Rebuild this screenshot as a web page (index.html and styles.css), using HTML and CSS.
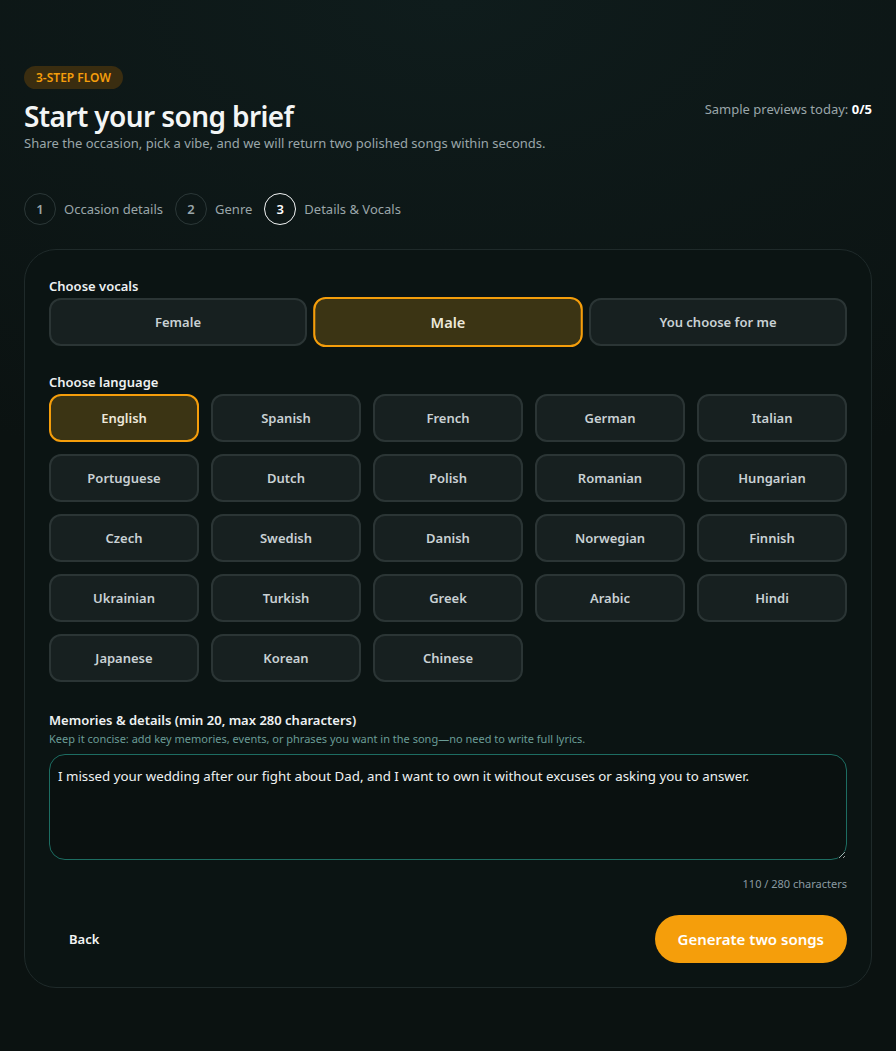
FILE: index.html
```html
<!DOCTYPE html>
<html lang="en">
<head>
<meta charset="utf-8">
<title>Start your song brief</title>
<link rel="stylesheet" href="styles.css">
</head>
<body>
<main class="page">
  <span class="badge">3-STEP FLOW</span>
  <header class="header">
    <div class="header-text">
      <h1 class="title">Start your song brief</h1>
      <p class="subtitle">Share the occasion, pick a vibe, and we will return two polished songs within seconds.</p>
    </div>
    <p class="quota">Sample previews today: <strong>0/5</strong></p>
  </header>

  <ol class="steps">
    <li class="step"><span class="step-num">1</span><span class="step-label">Occasion details</span></li>
    <li class="step"><span class="step-num">2</span><span class="step-label">Genre</span></li>
    <li class="step step-active"><span class="step-num">3</span><span class="step-label">Details &amp; Vocals</span></li>
  </ol>

  <section class="card">
    <div class="field">
      <h2 class="field-label">Choose vocals</h2>
      <div class="vocals">
        <button class="opt">Female</button>
        <button class="opt opt-selected opt-pop">Male</button>
        <button class="opt">You choose for me</button>
      </div>
    </div>

    <div class="field">
      <h2 class="field-label">Choose language</h2>
      <div class="langs">
        <button class="opt opt-selected">English</button>
        <button class="opt">Spanish</button>
        <button class="opt">French</button>
        <button class="opt">German</button>
        <button class="opt">Italian</button>
        <button class="opt">Portuguese</button>
        <button class="opt">Dutch</button>
        <button class="opt">Polish</button>
        <button class="opt">Romanian</button>
        <button class="opt">Hungarian</button>
        <button class="opt">Czech</button>
        <button class="opt">Swedish</button>
        <button class="opt">Danish</button>
        <button class="opt">Norwegian</button>
        <button class="opt">Finnish</button>
        <button class="opt">Ukrainian</button>
        <button class="opt">Turkish</button>
        <button class="opt">Greek</button>
        <button class="opt">Arabic</button>
        <button class="opt">Hindi</button>
        <button class="opt">Japanese</button>
        <button class="opt">Korean</button>
        <button class="opt">Chinese</button>
      </div>
    </div>

    <div class="field field-memo">
      <h2 class="field-label">Memories &amp; details (min 20, max 280 characters)</h2>
      <p class="hint">Keep it concise: add key memories, events, or phrases you want in the song—no need to write full lyrics.</p>
      <textarea class="memo">I missed your wedding after our fight about Dad, and I want to own it without excuses or asking you to answer.</textarea>
      <p class="count">110 / 280 characters</p>
    </div>

    <div class="actions">
      <button class="back">Back</button>
      <button class="generate">Generate two songs</button>
    </div>
  </section>
</main>
</body>
</html>
```

FILE: styles.css
```css
* { box-sizing: border-box; }

html, body {
  margin: 0;
  padding: 0;
}

body {
  min-height: 1051px;
  background:
    radial-gradient(ellipse 900px 500px at 50% 0%, #0f1c1c 0%, rgba(11,18,17,0) 100%),
    #0b1211;
  font-family: "Noto Sans", "Open Sans", sans-serif;
  color: #e6ebec;
}

.page {
  padding: 65px 24px 64px;
}

.badge {
  display: inline-block;
  height: 23px;
  line-height: 23px;
  padding: 0 12px;
  border-radius: 999px;
  background: #3a2d10;
  color: #f59e0b;
  font-size: 12px;
  font-weight: 600;
}

.header {
  display: flex;
  justify-content: space-between;
  align-items: flex-start;
  margin-top: 9px;
}

.title {
  margin: 0;
  font-size: 28px;
  line-height: 36px;
  font-weight: 600;
  color: #f3f5f5;
  letter-spacing: -0.6px;
}

.subtitle {
  margin: 1px 0 0;
  font-size: 13px;
  line-height: 16px;
  color: #9aa6a9;
}

.quota {
  margin: 3px 0 0;
  font-size: 13px;
  line-height: 16px;
  color: #9aa6a9;
}

.quota strong {
  color: #ffffff;
  font-weight: 700;
}

.steps {
  list-style: none;
  margin: 42px 0 0;
  padding: 0;
  display: flex;
  gap: 12px;
}

.step {
  display: flex;
  align-items: center;
  gap: 8px;
}

.step-num {
  width: 32px;
  height: 32px;
  border-radius: 50%;
  border: 1px solid #2b3737;
  display: flex;
  align-items: center;
  justify-content: center;
  font-size: 13px;
  font-weight: 600;
  color: #9aa6a9;
}

.step-label {
  font-size: 13px;
  color: #9aa6a9;
}

.step-active .step-num {
  border-color: #f2f4f4;
  color: #ffffff;
}

.card {
  margin-top: 24px;
  border: 1px solid #1f2a2a;
  border-radius: 32px;
  background: #0b1413;
  padding: 27px 24px 24px;
  display: flex;
  flex-direction: column;
}

.field + .field {
  margin-top: 27px;
}

.field + .field-memo {
  margin-top: 29px;
}

.field-label {
  margin: 0 0 3px;
  font-size: 13px;
  line-height: 18px;
  font-weight: 600;
  color: #eef1f2;
}

.vocals {
  display: grid;
  grid-template-columns: repeat(3, 1fr);
  gap: 12px;
}

.langs {
  display: grid;
  grid-template-columns: repeat(5, 1fr);
  gap: 12px;
}

.opt {
  height: 48px;
  border-radius: 12px;
  border: 2px solid #2b3535;
  background: #172020;
  color: #c9d1d4;
  font-family: inherit;
  font-size: 13px;
  font-weight: 600;
  cursor: pointer;
}

.opt-selected {
  border-color: #f59e0b;
  background: #3b3414;
  color: #ede8da;
}

.opt-pop {
  transform: scale(1.045);
  font-size: 14px;
}

.hint {
  margin: 2px 0 8px;
  font-size: 11px;
  line-height: 14px;
  color: #6a9c96;
}

.memo {
  display: block;
  width: 100%;
  height: 106px;
  resize: vertical;
  border: 1px solid #1d6d62;
  border-radius: 16px;
  background: #0a1110;
  color: #eef1f2;
  font-family: inherit;
  font-size: 13.3px;
  line-height: 20px;
  padding: 11px 8px;
  outline: none;
}

.count {
  margin: 17px 0 0;
  text-align: right;
  font-size: 11px;
  line-height: 14px;
  color: #8a9aa2;
}

.actions {
  margin-top: 24px;
  display: flex;
  justify-content: space-between;
  align-items: center;
}

.back {
  background: none;
  border: none;
  padding: 0 20px;
  height: 48px;
  color: #f3f5f5;
  font-family: inherit;
  font-size: 13px;
  font-weight: 600;
  cursor: pointer;
}

.generate {
  height: 48px;
  padding: 0 23px;
  border: none;
  border-radius: 999px;
  background: #f59e0b;
  color: #ffffff;
  font-family: inherit;
  font-size: 15px;
  font-weight: 600;
  cursor: pointer;
}
```
